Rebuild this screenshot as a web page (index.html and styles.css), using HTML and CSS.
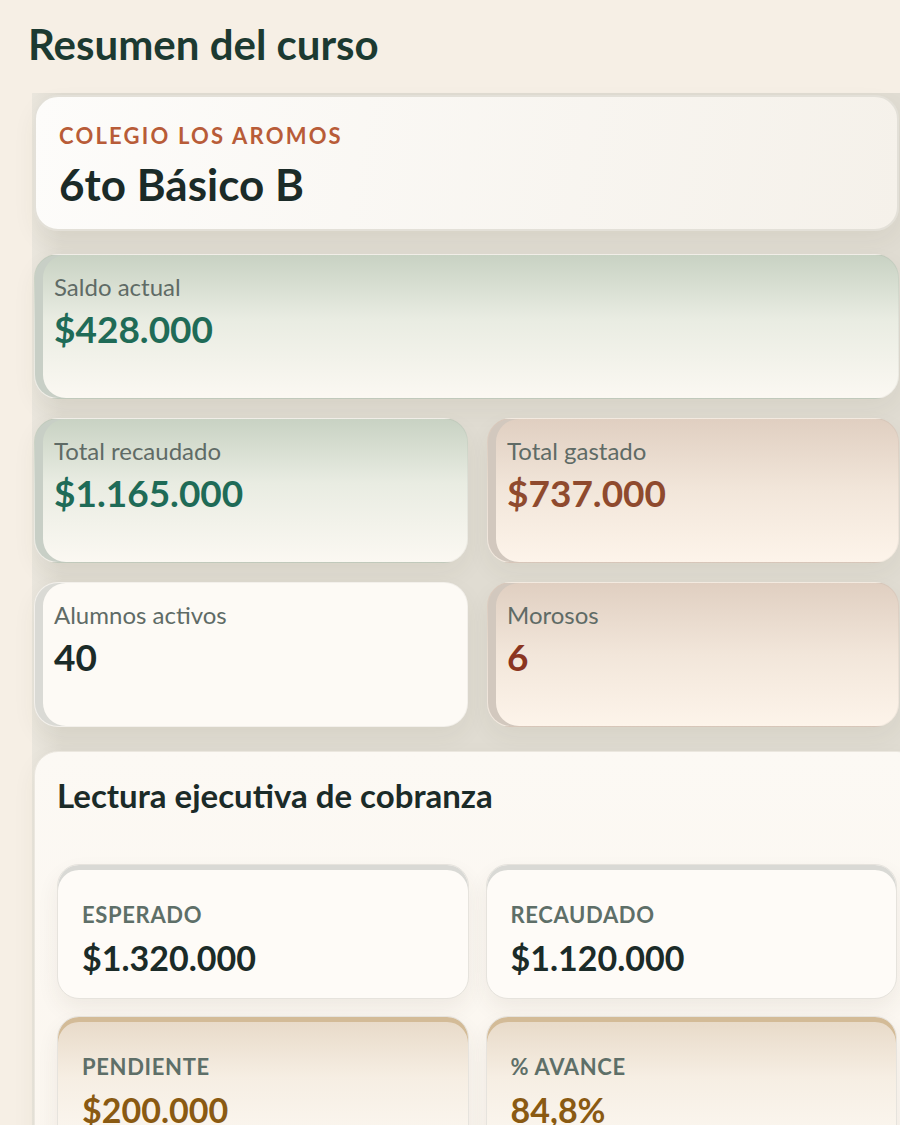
FILE: index.html
```html
<!DOCTYPE html>
<html lang="es">
<head>
  <meta charset="UTF-8">
  <meta name="viewport" content="width=device-width, initial-scale=1.0">
  <title>Resumen del curso</title>
  <link rel="stylesheet" href="styles.css">
</head>
<body>
  <main class="page">
    <h1 class="page-title">Resumen del curso</h1>

    <section class="board">
      <div class="card course">
        <div class="school">Colegio Los Aromos</div>
        <div class="course-name">6to Básico B</div>
      </div>

      <div class="card stat green">
        <div class="stat-label">Saldo actual</div>
        <div class="stat-value">$428.000</div>
      </div>

      <div class="pair">
        <div class="card stat green">
          <div class="stat-label">Total recaudado</div>
          <div class="stat-value">$1.165.000</div>
        </div>
        <div class="card stat rust">
          <div class="stat-label">Total gastado</div>
          <div class="stat-value">$737.000</div>
        </div>
      </div>

      <div class="pair">
        <div class="card stat plain">
          <div class="stat-label">Alumnos activos</div>
          <div class="stat-value">40</div>
        </div>
        <div class="card stat rust">
          <div class="stat-label">Morosos</div>
          <div class="stat-value alert">6</div>
        </div>
      </div>

      <div class="card exec">
        <h2 class="exec-title">Lectura ejecutiva de cobranza</h2>
        <div class="exec-grid">
          <div class="kpi">
            <div class="kpi-label">Esperado</div>
            <div class="kpi-value">$1.320.000</div>
          </div>
          <div class="kpi">
            <div class="kpi-label">Recaudado</div>
            <div class="kpi-value">$1.120.000</div>
          </div>
          <div class="kpi warm">
            <div class="kpi-label">Pendiente</div>
            <div class="kpi-value">$200.000</div>
          </div>
          <div class="kpi warm">
            <div class="kpi-label">% Avance</div>
            <div class="kpi-value">84,8%</div>
          </div>
        </div>
      </div>
    </section>
  </main>
</body>
</html>
```

FILE: styles.css
```css
html, body {
  overflow: hidden;
}
body {
  margin: 0;
  background: #f6efe5;
  font-family: "Trebuchet MS", Lato, "DejaVu Sans", sans-serif;
  color: #1b2b28;
  line-height: 1.2;
}
.page {
  padding: 19px 0 0 28px;
}
.page-title {
  margin: 0 0 24px;
  font-size: 42px;
  font-weight: 700;
  color: #1c3a31;
}

.board {
  margin-left: 4px;
  padding: 2px 0 40px 2px;
  width: 900px;
  display: flex;
  flex-direction: column;
  gap: 19px;
  background: linear-gradient(to right, #eae6dd, #e0dcd2 30px, #e0dcd2);
}
.card {
  border-radius: 24px;
  box-sizing: border-box;
  width: 865px;
  box-shadow: 0 10px 24px rgba(70, 60, 40, 0.06);
}
.pair {
  display: grid;
  grid-template-columns: 434px 412px;
  gap: 19px;
}
.pair .card {
  width: auto;
}

.course {
  margin-bottom: 4px;
  padding: 26px 23px 18px;
  border: 2px solid #e3e0d8;
  background: linear-gradient(100deg, #fdfcfa, #f5f1ea);
}
.school {
  font-size: 22px;
  font-weight: 700;
  letter-spacing: 0.1em;
  text-transform: uppercase;
  color: #b85c38;
}
.course-name {
  margin-top: 8px;
  font-size: 44px;
  font-weight: 700;
  color: #1b2b28;
}

.stat {
  min-height: 145px;
  padding: 18px 19px 20px;
  border: 1px solid rgba(0, 0, 0, 0.04);
}
.stat.green {
  background: linear-gradient(to bottom, #c8d2c3, #e9ece2 45%, #fbf8f2);
  box-shadow: inset 8px 0 0 #c8cfc6, 0 10px 24px rgba(70, 60, 40, 0.06);
}
.stat.rust {
  background: linear-gradient(to bottom, #e0cfc1, #f2e6da 50%, #fdf4ea);
  box-shadow: inset 8px 0 0 #d2c8be, 0 10px 24px rgba(70, 60, 40, 0.06);
}
.stat.plain {
  background: #fdfaf5;
  box-shadow: inset 8px 0 0 #dadad5, 0 10px 24px rgba(70, 60, 40, 0.06);
}
.stat-label {
  font-size: 24px;
  color: #5f6b66;
}
.stat-value {
  margin-top: 6px;
  font-size: 37px;
  font-weight: 700;
  color: #1b2b28;
}
.green .stat-value {
  color: #1f6b57;
}
.rust .stat-value {
  color: #8f4a2e;
}
.stat-value.alert {
  color: #8a3520;
}

.exec {
  width: 887px;
  margin-top: 5px;
  padding: 24px 23px 24px 22px;
  border: 1px solid #ebe7df;
  background: linear-gradient(to bottom, #fcf9f4, #fbf6ef);
}
.exec-title {
  margin: 0 0 49px;
  font-size: 33px;
  font-weight: 700;
  color: #1b2b28;
}
.exec-grid {
  display: grid;
  grid-template-columns: 1fr 1fr;
  gap: 17px;
}
.kpi {
  padding: 37px 24px 20px;
  border-radius: 22px;
  border: 1px solid #e6e3dd;
  background: #fefbf7;
  box-shadow: inset 0 5px 0 #d9d9d5, 0 10px 22px rgba(70, 60, 40, 0.07);
}
.kpi.warm {
  background: linear-gradient(to bottom, #e7d9c7, #f6eee3 45%, #fcf8f2);
  box-shadow: inset 0 5px 0 #d3bb97, 0 10px 22px rgba(70, 60, 40, 0.07);
}
.kpi-label {
  font-size: 22px;
  font-weight: 700;
  letter-spacing: 0.03em;
  text-transform: uppercase;
  color: #5e6f68;
}
.kpi-value {
  margin-top: 9px;
  font-size: 34px;
  font-weight: 700;
  color: #1b2b28;
}
.warm .kpi-value {
  color: #8a5a12;
}
```
